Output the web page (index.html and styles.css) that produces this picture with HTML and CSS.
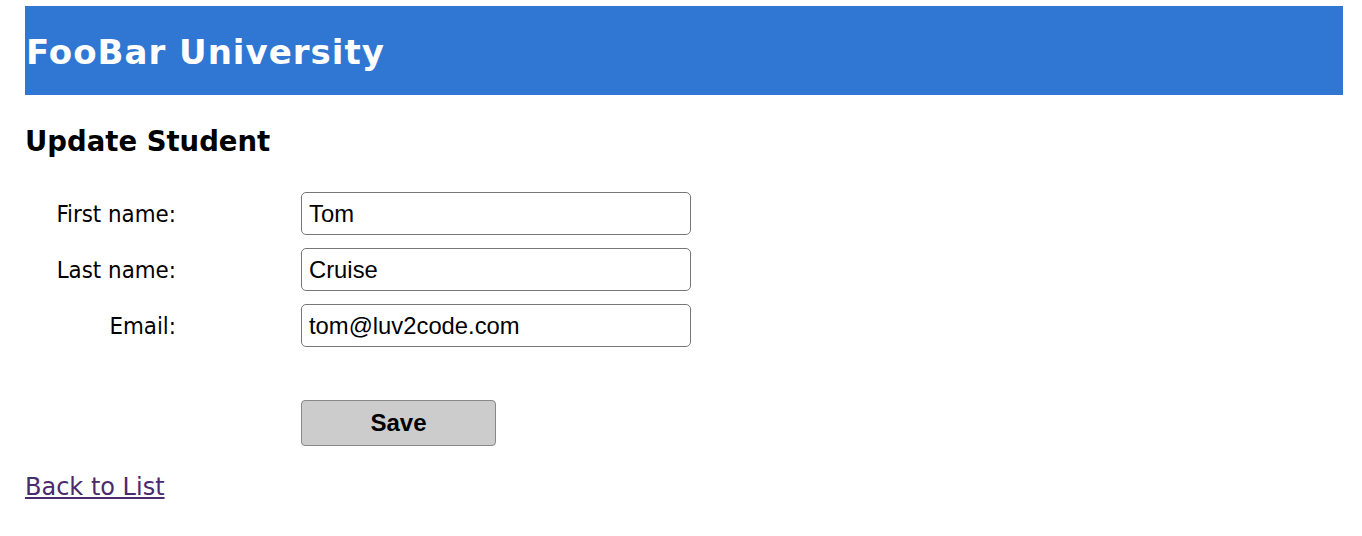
FILE: index.html
```html
<!DOCTYPE html>
<html>
<head>
<meta charset="utf-8">
<title>Update Student</title>
<link rel="stylesheet" href="styles.css">
</head>
<body>
<div class="page">
  <header class="banner">
    <h1 class="banner-title">FooBar University</h1>
  </header>
  <h2 class="page-title">Update Student</h2>
  <form class="student-form">
    <div class="form-row">
      <label class="form-label">First name:</label>
      <input class="form-input" type="text" value="Tom">
    </div>
    <div class="form-row">
      <label class="form-label">Last name:</label>
      <input class="form-input" type="text" value="Cruise">
    </div>
    <div class="form-row">
      <label class="form-label">Email:</label>
      <input class="form-input" type="text" value="tom@luv2code.com">
    </div>
    <div class="form-row form-actions">
      <span class="form-label"></span>
      <button class="save-btn" type="button">Save</button>
    </div>
  </form>
  <a class="back-link" href="#">Back to List</a>
</div>
</body>
</html>
```

FILE: styles.css
```css
html, body {
  margin: 0;
  padding: 0;
  background: #fff;
}
body {
  font-family: "DejaVu Sans", Verdana, sans-serif;
  color: #000;
}
.page {
  padding: 6px 19px 0 25px;
}
.banner {
  background: #3077d3;
  height: 89px;
  display: flex;
  align-items: center;
}
.banner-title {
  margin: 0;
  padding-left: 1px;
  padding-top: 2px;
  color: #fff;
  font-size: 34px;
  letter-spacing: 1px;
  font-weight: bold;
}
.page-title {
  margin: 30px 0 0 0;
  font-size: 27.5px;
  font-weight: bold;
}
.student-form {
  margin-top: 35px;
  display: flex;
  flex-direction: column;
  gap: 13px;
}
.form-row {
  display: flex;
  align-items: center;
}
.form-label {
  width: 151px;
  text-align: right;
  font-family: "DejaVu Sans Condensed", "DejaVu Sans", sans-serif;
  font-stretch: condensed;
  font-size: 23.8px;
  margin-right: 125px;
}
.form-input {
  box-sizing: border-box;
  width: 390px;
  height: 43px;
  border: 1px solid #777;
  border-radius: 5px;
  padding: 0 7px;
  font-family: "Liberation Sans", Arial, sans-serif;
  font-size: 23.8px;
  color: #000;
}
.form-actions {
  margin-top: 40px;
}
.save-btn {
  box-sizing: border-box;
  width: 195px;
  height: 46px;
  background: #cccccc;
  border: 1px solid #888;
  border-radius: 4px;
  font-family: "Liberation Sans", Arial, sans-serif;
  font-weight: bold;
  font-size: 24px;
  color: #000;
}
.back-link {
  display: inline-block;
  margin-top: 27px;
  font-size: 24px;
  color: #4b2a6e;
}
```
